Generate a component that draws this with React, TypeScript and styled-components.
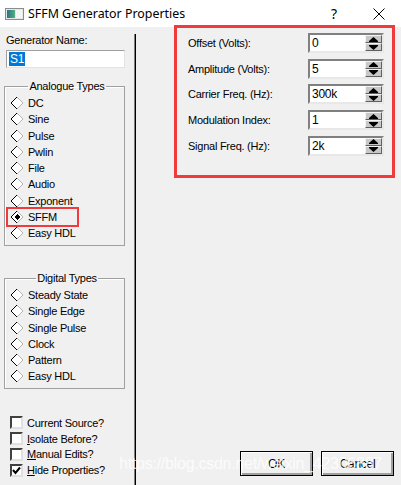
import styled, { createGlobalStyle } from "styled-components";

const GlobalStyle = createGlobalStyle`
  html, body {
    margin: 0;
    padding: 0;
    background: #f0f0f0;
  }
  body {
    width: 401px;
    height: 485px;
    overflow: hidden;
  }
`;

const analogueTypes = ["DC", "Sine", "Pulse", "Pwlin", "File", "Audio", "Exponent", "SFFM", "Easy HDL"];
const digitalTypes = ["Steady State", "Single Edge", "Single Pulse", "Clock", "Pattern", "Easy HDL"];

const fields = [
  { label: "Offset (Volts):", value: "0" },
  { label: "Amplitude (Volts):", value: "5" },
  { label: "Carrier Freq. (Hz):", value: "300k" },
  { label: "Modulation Index:", value: "1" },
  { label: "Signal Freq. (Hz):", value: "2k" },
];

const options = [
  { label: "Current Source?", key: "", checked: false },
  { label: "solate Before?", key: "I", checked: false },
  { label: "anual Edits?", key: "M", checked: false },
  { label: "ide Properties?", key: "H", checked: true },
];

function Diamond({ checked }: { checked?: boolean }) {
  return (
    <svg width="14" height="14" viewBox="0 0 14 14" shapeRendering="crispEdges">
      <polygon points="7,1 13,7 7,13 1,7" fill="#ffffff" />
      <polyline points="7,13 1,7 7,1" fill="none" stroke="#000" strokeWidth="1.4" />
      <polyline points="7,1 13,7 7,13" fill="none" stroke="#b4b4b4" strokeWidth="1.2" />
      {checked && <polygon points="7,4 10,7 7,10 4,7" fill="#000" />}
    </svg>
  );
}

function AppIcon() {
  return (
    <svg width="19" height="12" viewBox="0 0 19 12">
      <defs>
        <linearGradient id="ic" x1="0" y1="0" x2="1" y2="0">
          <stop offset="0" stopColor="#2e6f8e" />
          <stop offset="1" stopColor="#55b07a" />
        </linearGradient>
      </defs>
      <rect x="0.5" y="0.5" width="18" height="11" fill="#e8e8e8" stroke="#8c8c8c" />
      <rect x="2" y="2" width="8" height="8" fill="url(#ic)" />
      <rect x="11" y="2" width="6" height="8" fill="#f6f6f6" />
    </svg>
  );
}

function CloseIcon() {
  return (
    <svg width="12" height="12" viewBox="0 0 12 12">
      <path d="M0.5 0.5 L11.5 11.5 M11.5 0.5 L0.5 11.5" stroke="#000" strokeWidth="1" />
    </svg>
  );
}

function Spinner() {
  return (
    <SpinBox>
      <SpinHalf>
        <svg width="9" height="5" viewBox="0 0 9 5">
          <polygon points="4.5,0 9,4 0,4" fill="#000" />
          <rect x="0" y="4" width="9" height="1" fill="#000" />
        </svg>
      </SpinHalf>
      <SpinHalf>
        <svg width="9" height="5" viewBox="0 0 9 5">
          <rect x="0" y="0" width="9" height="1" fill="#000" />
          <polygon points="0,1 9,1 4.5,5" fill="#000" />
        </svg>
      </SpinHalf>
    </SpinBox>
  );
}

export default function App() {
  return (
    <Window>
      <GlobalStyle />
      <TitleBar>
        <AppIcon />
        <TitleText>SFFM Generator Properties</TitleText>
        <HelpGlyph>?</HelpGlyph>
        <CloseButton>
          <CloseIcon />
        </CloseButton>
      </TitleBar>

      <Body>
        <LeftPane>
          <NameLabel>Generator Name:</NameLabel>
          <NameInput>
            <Selected>S1</Selected>
          </NameInput>

          <Group $top={12} $height={166}>
            <Legend>Analogue Types</Legend>
            {analogueTypes.map((t) => (
              <RadioRow key={t} $marked={t === "SFFM"}>
                <Diamond checked={t === "SFFM"} />
                <span>{t}</span>
              </RadioRow>
            ))}
          </Group>

          <Group $top={26} $height={117}>
            <Legend>Digital Types</Legend>
            {digitalTypes.map((t) => (
              <RadioRow key={t}>
                <Diamond />
                <span>{t}</span>
              </RadioRow>
            ))}
          </Group>

          <CheckList>
            {options.map((o) => (
              <CheckRow key={o.label}>
                <CheckBox>
                  {o.checked && (
                    <svg width="9" height="9" viewBox="0 0 9 9">
                      <polyline points="1,4 3.5,7 8,1.5" fill="none" stroke="#000" strokeWidth="2" />
                    </svg>
                  )}
                </CheckBox>
                <span>
                  {o.key && <u>{o.key}</u>}
                  {o.label}
                </span>
              </CheckRow>
            ))}
          </CheckList>
        </LeftPane>

        <Divider />

        <RightPane>
          <MarkedPanel>
            {fields.map((f) => (
              <FieldRow key={f.label}>
                <span>{f.label}</span>
                <SpinInput>
                  <SpinValue>{f.value}</SpinValue>
                  <Spinner />
                </SpinInput>
              </FieldRow>
            ))}
          </MarkedPanel>

          <ButtonRow>
            <DialogButton>OK</DialogButton>
            <DialogButton>Cancel</DialogButton>
          </ButtonRow>
        </RightPane>
      </Body>

      <Watermark>https://blog.csdn.net/weixin_42306887</Watermark>
    </Window>
  );
}

const Window = styled.div`
  position: relative;
  width: 401px;
  height: 485px;
  display: flex;
  flex-direction: column;
  background: #f0f0f0;
  font-family: "Liberation Sans", Arial, sans-serif;
  font-size: 11px;
  letter-spacing: -0.25px;
  color: #000;
  overflow: hidden;
`;

const TitleBar = styled.div`
  height: 27px;
  flex: none;
  display: flex;
  align-items: center;
  padding-left: 5px;
  background: #ffffff;
  letter-spacing: 0;
`;

const TitleText = styled.span`
  margin-left: 4px;
  font-family: "Noto Sans", "Open Sans", sans-serif;
  font-size: 12.4px;
  color: #000;
`;

const HelpGlyph = styled.span`
  margin-left: auto;
  font-family: "Noto Sans", sans-serif;
  font-size: 14px;
`;

const CloseButton = styled.span`
  display: flex;
  margin: 1px 16px 0 36px;
`;

const Body = styled.div`
  flex: 1;
  display: flex;
`;

const LeftPane = styled.div`
  width: 130px;
  padding: 6px 0 0 4px;
  display: flex;
  flex-direction: column;
`;

const NameLabel = styled.div`
  padding-left: 2px;
  line-height: 15px;
`;

const NameInput = styled.div`
  width: 113px;
  height: 14px;
  margin: 2px 0 0 2px;
  padding: 1px 2px;
  background: #fff;
  border: 1px solid;
  border-color: #a0a0a0 #e3e3e3 #e3e3e3 #a0a0a0;
  display: flex;
  align-items: center;
`;

const Selected = styled.span`
  background: #0078d7;
  color: #fff;
  font-size: 12px;
  line-height: 14px;
  padding: 0 1px;
`;

const Group = styled.fieldset<{ $top: number; $height: number }>`
  width: 121px;
  height: ${(p) => p.$height}px;
  box-sizing: border-box;
  margin: ${(p) => p.$top}px 0 0 0;
  padding: 3px 0 0 5px;
  border: 1px solid #a0a0a0;
  box-shadow: inset 1px 1px 0 #ffffff;
  min-width: 0;
`;

const Legend = styled.legend`
  margin: 0 auto;
  padding: 0 1px;
  line-height: 12px;
`;

const RadioRow = styled.div<{ $marked?: boolean }>`
  height: 16.25px;
  display: flex;
  align-items: center;
  gap: 4px;
  width: ${(p) => (p.$marked ? "67px" : "auto")};
  margin-left: ${(p) => (p.$marked ? "-2px" : "0")};
  padding-left: ${(p) => (p.$marked ? "2px" : "0")};
  outline: ${(p) => (p.$marked ? "2.5px solid #ef3b3b" : "none")};
`;

const CheckList = styled.div`
  margin-top: 26px;
  padding-left: 6px;
  display: flex;
  flex-direction: column;
`;

const CheckRow = styled.div`
  height: 15.8px;
  display: flex;
  align-items: center;
  gap: 4px;
`;

const CheckBox = styled.div`
  width: 9px;
  height: 9px;
  background: #fff;
  border: 2px solid;
  border-color: #404040 #e0e0e0 #e0e0e0 #404040;
  display: flex;
  align-items: center;
  justify-content: center;
`;

const Divider = styled.div`
  width: 1px;
  margin-top: 7px;
  background: #000;
  border-left: 1px solid #808080;
`;

const RightPane = styled.div`
  flex: 1;
  display: flex;
  flex-direction: column;
`;

const MarkedPanel = styled.div`
  width: 221px;
  height: 153px;
  margin: -2px 0 0 38px;
  padding: 5px 8px 0 11px;
  box-sizing: border-box;
  border: 3px solid #ef3b3b;
  display: flex;
  flex-direction: column;
  gap: 5.7px;
`;

const FieldRow = styled.div`
  height: 20px;
  display: flex;
  align-items: center;
  justify-content: space-between;
`;

const SpinInput = styled.div`
  width: 72px;
  height: 16px;
  background: #fff;
  border: 2px solid;
  border-color: #808080 #e8e8e8 #e8e8e8 #808080;
  display: flex;
  align-items: stretch;
`;

const SpinValue = styled.span`
  flex: 1;
  padding-left: 2px;
  font-size: 12px;
  line-height: 16px;
`;

const SpinBox = styled.div`
  width: 17px;
  display: flex;
  flex-direction: column;
`;

const SpinHalf = styled.div`
  flex: 1;
  background: #c8c8c8;
  border: 1px solid;
  border-color: #f4f4f4 #606060 #606060 #f4f4f4;
  display: flex;
  align-items: center;
  justify-content: center;
`;

const ButtonRow = styled.div`
  margin-top: auto;
  padding: 0 7px 9px 0;
  display: flex;
  justify-content: flex-end;
  gap: 8px;
`;

const DialogButton = styled.button`
  width: 73px;
  height: 25px;
  padding: 0;
  background: #f0f0f0;
  border: 1px solid #000;
  box-shadow: inset 1px 1px 0 #ffffff, inset -2px -2px 0 #a0a0a0;
  font-family: "Liberation Sans", Arial, sans-serif;
  font-size: 12px;
  letter-spacing: -0.25px;
  color: #000;
`;

const Watermark = styled.div`
  position: absolute;
  left: 119px;
  top: 455px;
  font-family: "Liberation Sans", Arial, sans-serif;
  font-size: 16px;
  color: rgba(255, 255, 255, 0.8);
  white-space: nowrap;
  pointer-events: none;
`;
